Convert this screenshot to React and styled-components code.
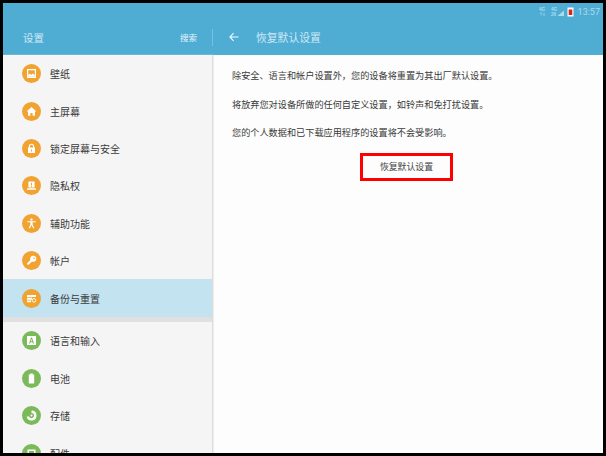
import React from "react";
import styled, { createGlobalStyle } from "styled-components";

const GlobalStyle = createGlobalStyle`
  html, body {
    margin: 0;
    padding: 0;
    background: #000;
    font-family: "Noto Sans CJK SC", "Liberation Sans", sans-serif;
  }
`;

const Frame = styled.div`
  width: 600px;
  height: 450px;
  margin: 3px;
  display: flex;
  flex-direction: column;
  overflow: hidden;
  background: #fdfdfd;
`;

const Header = styled.header`
  height: 52px;
  flex: none;
  display: flex;
  flex-direction: column;
  background: #4fadd4;
`;

const StatusBar = styled.div`
  height: 18px;
  display: flex;
  align-items: center;
  justify-content: flex-end;
  gap: 2px;
  padding: 0 3px 1px 0;
  box-sizing: border-box;
  color: #a9dcee;
`;

const Clock = styled.span`
  font-family: "Roboto", sans-serif;
  font-size: 9px;
  margin-left: 2px;
`;

const TitleBar = styled.div`
  flex: 1;
  display: flex;
  align-items: center;
  padding-bottom: 2px;
  color: #cfe9f4;
`;

const TitleLeft = styled.div`
  width: 210px;
  height: 17px;
  flex: none;
  display: flex;
  align-items: center;
  justify-content: space-between;
  box-sizing: border-box;
  padding: 0 15px 0 20px;
  border-right: 1px solid #78c0de;
`;

const AppTitle = styled.span`
  font-size: 10.5px;
`;

const SearchLabel = styled.span`
  font-size: 8.5px;
  color: #e6f4fa;
`;

const TitleRight = styled.div`
  display: flex;
  align-items: center;
  padding-left: 16px;
  gap: 17px;
`;

const PageTitle = styled.span`
  font-size: 10.8px;
`;

const Body = styled.div`
  flex: 1;
  min-height: 0;
  display: flex;
`;

const Sidebar = styled.nav`
  width: 210px;
  flex: none;
  box-sizing: border-box;
  background: #f5f5f5;
  border-right: 1px solid #dcdcdc;
  box-shadow: 1px 0 1px #efefef;
`;

const Row = styled.div`
  height: 37.4px;
  display: flex;
  align-items: center;
  padding-left: 19px;
  gap: 9px;
  background: ${(props) => (props.$active ? "#c3e3f0" : "transparent")};
`;

const Spacer = styled.div`
  height: 5.5px;
  background: #e0e0e0;
`;

const Badge = styled.span`
  width: 19px;
  height: 19px;
  flex: none;
  border-radius: 50%;
  display: flex;
  align-items: center;
  justify-content: center;
  background: ${(props) => props.$color};
`;

const RowLabel = styled.span`
  font-size: 10px;
  color: #3a3a3a;
`;

const Content = styled.main`
  flex: 1;
  padding-top: 13px;
`;

const Paragraph = styled.p`
  margin: 0 0 13.5px 19px;
  font-size: 9.17px;
  line-height: 15px;
  color: #3a3a3a;
`;

const ButtonRow = styled.div`
  display: flex;
  justify-content: center;
  padding-right: 3px;
  margin-top: -1px;
`;

const ResetButton = styled.button`
  width: 93px;
  height: 28px;
  padding: 0;
  background: transparent;
  border: 3px solid #f00;
  font-family: inherit;
  font-size: 8.9px;
  color: #444;
`;

const Icon = ({ children }) => (
  <svg width="13" height="13" viewBox="0 0 13 13" fill="#fff">{children}</svg>
);

const ORANGE = "#f0a331";
const GREEN = "#7cb95a";

const topItems = [
  {
    label: "壁纸",
    icon: (
      <>
        <path fillRule="evenodd" d="M2 2h9v9H2zM3.2 3.2v6.6h6.6V3.2z" />
        <path d="M3.2 9.8V8l1.7-1.6L6.3 8l1.3-1.5 2.2 1.6v1.7z" />
      </>
    ),
  },
  {
    label: "主屏幕",
    icon: <path d="M6.5 2L11.5 6.6H10v4.2H7.6V8H5.4v2.8H3V6.6H1.5z" />,
  },
  {
    label: "锁定屏幕与安全",
    icon: (
      <>
        <path fill="none" stroke="#fff" strokeWidth="1.1" d="M4.4 6V4.4a2.1 2.1 0 0 1 4.2 0V6" />
        <path fillRule="evenodd" d="M3 5.6h7v5.4H3zM6 7.4v2h1v-2z" />
      </>
    ),
  },
  {
    label: "隐私权",
    icon: (
      <path fillRule="evenodd" d="M3.4 2.5h6.2v6H3.4zM6 3.8v2.4h1V3.8zM6 6.8v.9h1v-.9zM2.4 9.2h8.2l.7 1.6H1.7z" />
    ),
  },
  {
    label: "辅助功能",
    icon: (
      <>
        <circle cx="6.5" cy="2.6" r="1.2" />
        <path d="M2.2 4.2h8.6v1H7.6v2l1.6 3.9-1 .4-1.7-3.6-1.7 3.6-1-.4 1.6-3.9v-2H2.2z" />
      </>
    ),
  },
  {
    label: "帐户",
    icon: (
      <path fillRule="evenodd" d="M8.2 1.8a3 3 0 1 1-1.3 5.6L3.6 10.8 2.2 10.6 2 9.4l3.4-3.3a3 3 0 0 1 2.8-4.3zM9 3.4a.8.8 0 1 0 0 1.6.8.8 0 0 0 0-1.6z" />
    ),
  },
  {
    label: "备份与重置",
    active: true,
    icon: (
      <>
        <path d="M2 3h9v2H2zM2 5.8h5v2H2zM2 8.6h4v1.6H2z" />
        <circle cx="9" cy="8.4" r="1.8" fill="none" stroke="#fff" strokeWidth="0.9" />
      </>
    ),
  },
];

const bottomItems = [
  {
    label: "语言和输入",
    icon: (
      <path fillRule="evenodd" d="M2 2h9v9H2zM6 3.6L4 9.4h1.1l.4-1.2h2l.4 1.2H9L7 3.6zM5.8 7.2l.7-2.2.7 2.2z" />
    ),
  },
  {
    label: "电池",
    icon: <path d="M5.2 1.5h2.6v1h1.4v9H3.8v-9h1.4z" />,
  },
  {
    label: "存储",
    icon: (
      <path fillRule="evenodd" d="M6.5 1.5a5 5 0 1 1-4.9 6h2.5a2.6 2.6 0 1 0 2.4-3.5zM6.5 5.4a1.1 1.1 0 1 0 0 2.2 1.1 1.1 0 0 0 0-2.2z" />
    ),
  },
  {
    label: "配件",
    icon: <path fillRule="evenodd" d="M2.5 2.5h8v8h-8zM4 4v5h5V4z" />,
  },
];

const MenuRow = ({ item, color }) => (
  <Row $active={item.active}>
    <Badge $color={color}>
      <Icon>{item.icon}</Icon>
    </Badge>
    <RowLabel>{item.label}</RowLabel>
  </Row>
);

const StatusIcons = () => (
  <svg width="35" height="10" viewBox="0 0 35 10" fill="currentColor" fontFamily="Liberation Sans" fontSize="4.6" fontWeight="700">
    <text x="0" y="4.4">4G</text>
    <path d="M2 5.5v3M1 6.5l1-1 1 1M5 5.5v3M4 7.5l1 1 1-1" stroke="currentColor" strokeWidth="0.6" fill="none" />
    <text x="12" y="4.4">4G</text>
    <text x="12" y="9">26</text>
    <path d="M25 9V3.5L18.5 9z" />
    <rect x="28.5" y="0.5" width="6" height="9" fill="#fff" />
    <rect x="29.7" y="2.5" width="3.6" height="5.5" fill="#d8261c" />
  </svg>
);

const BackArrow = () => (
  <svg width="10" height="10" viewBox="0 0 10 10" fill="none" stroke="#f2fafd" strokeWidth="1.1">
    <path d="M9.5 5H1M4.6 1.2L.9 5l3.7 3.8" />
  </svg>
);

const App = () => {
  return (
    <>
      <GlobalStyle />
      <Frame>
        <Header>
          <StatusBar>
            <StatusIcons />
            <Clock>13:57</Clock>
          </StatusBar>
          <TitleBar>
            <TitleLeft>
              <AppTitle>设置</AppTitle>
              <SearchLabel>搜索</SearchLabel>
            </TitleLeft>
            <TitleRight>
              <BackArrow />
              <PageTitle>恢复默认设置</PageTitle>
            </TitleRight>
          </TitleBar>
        </Header>
        <Body>
          <Sidebar>
            {topItems.map((item) => (
              <MenuRow key={item.label} item={item} color={ORANGE} />
            ))}
            <Spacer />
            {bottomItems.map((item) => (
              <MenuRow key={item.label} item={item} color={GREEN} />
            ))}
          </Sidebar>
          <Content>
            <Paragraph>除安全、语言和帐户设置外，您的设备将重置为其出厂默认设置。</Paragraph>
            <Paragraph>将放弃您对设备所做的任何自定义设置，如铃声和免打扰设置。</Paragraph>
            <Paragraph>您的个人数据和已下载应用程序的设置将不会受影响。</Paragraph>
            <ButtonRow>
              <ResetButton>恢复默认设置</ResetButton>
            </ButtonRow>
          </Content>
        </Body>
      </Frame>
    </>
  );
};

export default App;
